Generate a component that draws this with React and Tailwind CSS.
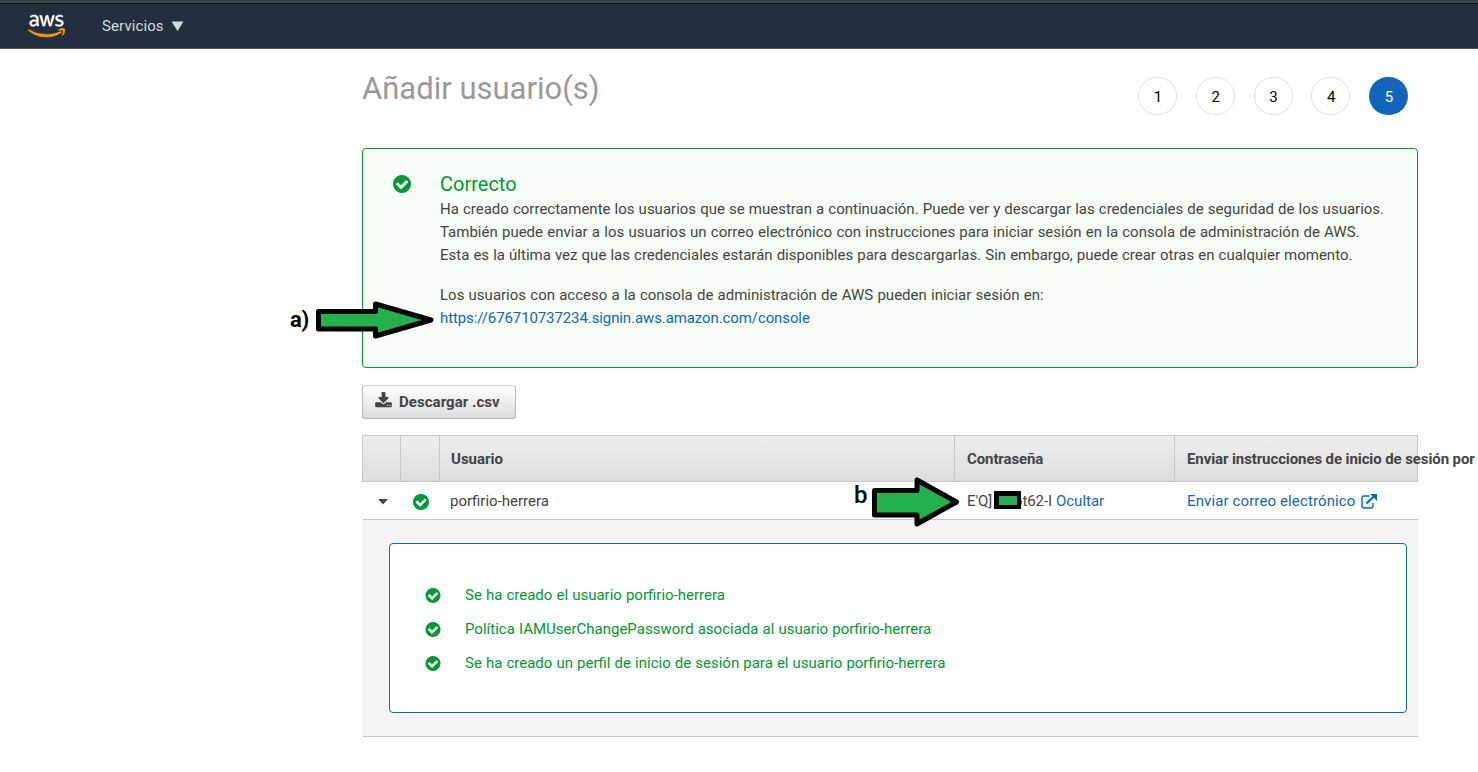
import React from "react";
import { FaAws } from "react-icons/fa";

function CheckCircle({ className }) {
  return (
    <svg viewBox="0 128 1536 1536" className={className} fill="#009933">
      <path d="M1284 734q0-28-18-46l-91-90q-19-19-45-19t-45 19l-408 407-226-226q-19-19-45-19t-45 19l-91 90q-18 18-18 46 0 27 18 45l362 362q19 19 45 19 27 0 46-19l543-543q18-18 18-45zm252 162q0 209-103 385.5t-279.5 279.5-385.5 103-385.5-103-279.5-279.5-103-385.5 103-385.5 279.5-279.5 385.5-103 385.5 103 279.5 279.5 103 385.5z" />
    </svg>
  );
}

function Header() {
  return (
    <header className="flex h-[49px] items-center border-b border-[#4d5665] bg-[#232f3e] shadow-[inset_0_3px_0_#37474f,inset_0_4px_0_#10161d]">
      <svg width="0" height="0" className="absolute">
        <linearGradient id="aws" gradientUnits="userSpaceOnUse" x1="0" y1="0" x2="0" y2="512">
          <stop offset="0.59" stopColor="#ffffff" />
          <stop offset="0.59" stopColor="#ff9900" />
        </linearGradient>
      </svg>
      <FaAws className="ml-[28px] mt-[3px] h-[30px] w-[37px]" style={{ fill: "url(#aws)", stroke: "url(#aws)", strokeWidth: 7 }} />
      <span className="ml-[37px] mt-[4px] text-[15px] tracking-[0.1px] text-[#d5dbdb]">Servicios</span>
      <svg width="13" height="10" className="ml-[7px] mt-[3px]" fill="#d5dbdb">
        <path d="M0.5 0.5H12.5L6.5 10Z" />
      </svg>
    </header>
  );
}

function Steps() {
  return (
    <ol className="mt-7 mr-[10px] flex gap-[18.75px] text-[15px]">
      {[1, 2, 3, 4].map((n) => (
        <li key={n} className="flex h-[38px] w-[39px] items-center justify-center rounded-full border border-[#e1e1e1] bg-white pt-[2px] pl-px text-black">
          {n}
        </li>
      ))}
      <li className="flex h-[38px] w-[39px] items-center justify-center rounded-full bg-[#1166bb] pt-[2px] pl-px text-white">5</li>
    </ol>
  );
}

function Success() {
  return (
    <section className="relative mt-[33px] flex h-[220px] rounded border border-[#009933] bg-[#f6fef6] pt-[23px]">
      <CheckCircle className="mt-[3px] ml-[30px] size-[18px]" />
      <div className="ml-[29px] whitespace-nowrap text-[15px] leading-[23px] text-[#444]">
        <h2 className="mb-px text-[20px] leading-[25px] text-[#009933]">Correcto</h2>
        <p className="[word-spacing:0.36px]">Ha creado correctamente los usuarios que se muestran a continuación. Puede ver y descargar las credenciales de seguridad de los usuarios.</p>
        <p className="[word-spacing:0.5px]">También puede enviar a los usuarios un correo electrónico con instrucciones para iniciar sesión en la consola de administración de AWS.</p>
        <p className="[word-spacing:0.36px]">Esta es la última vez que las credenciales estarán disponibles para descargarlas. Sin embargo, puede crear otras en cualquier momento.</p>
        <p className="mt-[17px] [word-spacing:0.5px]">Los usuarios con acceso a la consola de administración de AWS pueden iniciar sesión en:</p>
        <a className="block tracking-[-0.1px] text-[#1166bb]">https://676710737234.signin.aws.amazon.com/console</a>
      </div>
      <div className="absolute top-[151px] left-[-73px] flex items-start text-black">
        <span className="mt-[7px] w-[25px] text-[22px] leading-[26px] font-bold tracking-[-0.3px]">a)</span>
        <svg width="122" height="40">
          <path d="M3.5 11.5H60.5V4L116 20L60.5 36V29H3.5Z" fill="#22b14c" stroke="#000" strokeWidth="5" strokeLinejoin="round" />
        </svg>
      </div>
    </section>
  );
}

function UserTable() {
  return (
    <section className="mt-4 whitespace-nowrap text-[15px] text-[#444]">
      <div className="grid h-[47px] grid-cols-[38px_39px_515px_220px_242px] items-stretch border border-[#c8c8c8] bg-linear-to-b from-[#eeeeee] to-[#dddddd] font-bold">
        <div className="border-r border-[#c8c8c8]" />
        <div className="border-r border-[#c8c8c8]" />
        <div className="flex items-center border-r border-[#c8c8c8] pt-px pl-[11px]">Usuario</div>
        <div className="flex items-center border-r border-[#c8c8c8] pt-px pl-[12px] tracking-[-0.1px]">Contraseña</div>
        <div className="flex items-center pt-px pl-[12px] tracking-[-0.1px]">Enviar instrucciones de inicio de sesión por</div>
      </div>
      <div className="grid h-[38px] grid-cols-[39px_49px_517px_220px_231px] items-center border-b border-[#c8c8c8]">
        <svg width="10" height="6" className="ml-[15.5px] mt-[3px]" fill="#444"><path d="M0 0H10L5 5.5Z" /></svg>
        <CheckCircle className="ml-[12px] mt-[3px] size-4" />
        <span className="mt-px">porfirio-herrera</span>
        <div className="relative mt-px flex">
          <span className="w-[22px] tracking-[-0.1px]">E'Q]</span>
          <span className="relative z-10 mt-px ml-[5px] h-[18px] w-[27px] border-[5px] border-r-[4px] border-b-[4px] border-black bg-[#22b14c]" />
          <span className="-ml-[7px] tracking-[-0.1px]">ot62-I</span>
          <a className="ml-[4px] text-[#1166bb]">Ocultar</a>
          <div className="absolute top-[-15px] left-[-113px] flex text-black">
            <span className="mt-[7px] w-[16px] text-[24px] leading-[26px] font-medium">b</span>
            <svg width="90" height="52">
              <path d="M4.5 15.5H47V5L86.5 27L47 49V40H4.5Z" fill="#22b14c" stroke="#000" strokeWidth="5" strokeLinejoin="round" />
            </svg>
          </div>
        </div>
        <a className="mt-px flex items-center tracking-[0.12px] text-[#1166bb]">
          Enviar correo electrónico
          <svg width="16" height="15" className="ml-[5px]" fill="none" stroke="#1166bb">
            <path d="M8.5 2H3Q1 2 1 4V12Q1 14 3 14H10Q12 14 12 12V9" fill="#edf3fa" strokeWidth="1.4" />
            <path d="M5.5 9.5L12.5 2.8" strokeWidth="2.2" />
            <path d="M9 0H16V7Z" fill="#1166bb" stroke="none" />
          </svg>
        </a>
      </div>
      <div className="h-[217px] border-b border-[#c8c8c8] bg-[#f5f5f5] pt-[23px] pr-[11px] pl-[27px]">
        <ul className="flex h-[170px] flex-col rounded border border-[#1166bb] bg-white pt-[34px] pl-[35px] text-[#009933] [word-spacing:0.36px]">
          {[
            "Se ha creado el usuario porfirio-herrera",
            "Política IAMUserChangePassword asociada al usuario porfirio-herrera",
            "Se ha creado un perfil de inicio de sesión para el usuario porfirio-herrera",
          ].map((t) => (
            <li key={t} className="flex h-[34px] items-center">
              <CheckCircle className="mr-6 mt-px h-[15px] w-4" />
              <span>{t}</span>
            </li>
          ))}
        </ul>
      </div>
    </section>
  );
}

export default function App() {
  return (
    <div className="h-[772px] overflow-hidden bg-white font-['Roboto',sans-serif]">
      <Header />
      <main className="ml-[362px] w-[1056px]">
        <div className="flex h-[66px] justify-between">
          <h1 className="mt-[20px] text-[31px] leading-[40px] font-normal text-[#999]">Añadir usuario(s)</h1>
          <Steps />
        </div>
        <Success />
        <button className="mt-[17px] flex h-[34px] w-[154px] items-center rounded-[3px] border border-[#b7b7b7] border-t-[#d5d5d5] bg-linear-to-b from-white to-[#dddddd] pl-3 text-[15px] font-bold tracking-[0.05px] text-[#444]">
          <svg viewBox="64 0 1664 1600" className="mr-[7px] mb-1 h-[16px] w-[17px]" fill="#444">
            <path d="M1344 1344q0-26-19-45t-45-19-45 19-19 45 19 45 45 19 45-19 19-45zm256 0q0-26-19-45t-45-19-45 19-19 45 19 45 45 19 45-19 19-45zm128-224v320q0 40-28 68t-68 28h-1472q-40 0-68-28t-28-68v-320q0-40 28-68t68-28h465l135 136q58 56 136 56t136-56l136-136h464q40 0 68 28t28 68zm-325-569q17 41-14 70l-448 448q-18 19-45 19t-45-19l-448-448q-31-29-14-70 17-39 59-39h256v-448q0-26 19-45t45-19h256q26 0 45 19t19 45v448h256q42 0 59 39z" />
          </svg>
          Descargar .csv
        </button>
        <UserTable />
      </main>
    </div>
  );
}
